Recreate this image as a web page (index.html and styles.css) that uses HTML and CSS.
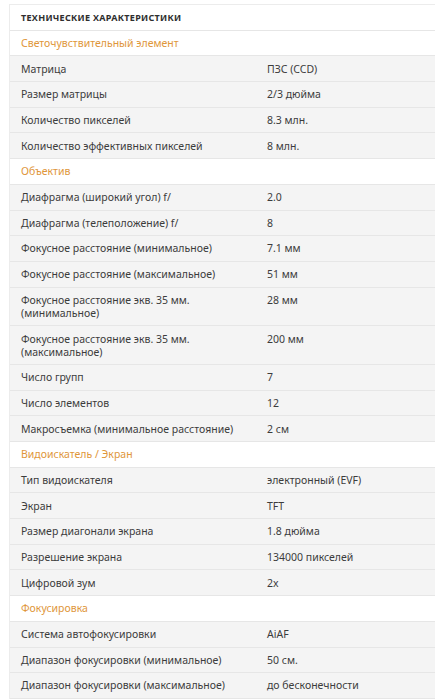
FILE: index.html
```html
<!DOCTYPE html>
<html lang="ru">
<head>
<meta charset="utf-8">
<link rel="stylesheet" href="styles.css">
</head>
<body>
<div class="specs">
  <div class="row head"><div class="cell">Технические характеристики</div></div>
  <div class="row section"><div class="cell">Светочувствительный элемент</div></div>
  <div class="row"><div class="cell">Матрица</div><div class="cell">ПЗС (CCD)</div></div>
  <div class="row"><div class="cell">Размер матрицы</div><div class="cell">2/3 дюйма</div></div>
  <div class="row"><div class="cell">Количество пикселей</div><div class="cell">8.3 млн.</div></div>
  <div class="row"><div class="cell">Количество эффективных пикселей</div><div class="cell">8 млн.</div></div>
  <div class="row section"><div class="cell">Объектив</div></div>
  <div class="row"><div class="cell">Диафрагма (широкий угол) f/</div><div class="cell">2.0</div></div>
  <div class="row"><div class="cell">Диафрагма (телеположение) f/</div><div class="cell">8</div></div>
  <div class="row"><div class="cell">Фокусное расстояние (минимальное)</div><div class="cell">7.1 мм</div></div>
  <div class="row"><div class="cell">Фокусное расстояние (максимальное)</div><div class="cell">51 мм</div></div>
  <div class="row"><div class="cell">Фокусное расстояние экв. 35 мм.<br>(минимальное)</div><div class="cell">28 мм</div></div>
  <div class="row"><div class="cell">Фокусное расстояние экв. 35 мм.<br>(максимальное)</div><div class="cell">200 мм</div></div>
  <div class="row"><div class="cell">Число групп</div><div class="cell">7</div></div>
  <div class="row"><div class="cell">Число элементов</div><div class="cell">12</div></div>
  <div class="row"><div class="cell">Макросъемка (минимальное расстояние)</div><div class="cell">2 см</div></div>
  <div class="row section"><div class="cell">Видоискатель / Экран</div></div>
  <div class="row"><div class="cell">Тип видоискателя</div><div class="cell">электронный (EVF)</div></div>
  <div class="row"><div class="cell">Экран</div><div class="cell">TFT</div></div>
  <div class="row"><div class="cell">Размер диагонали экрана</div><div class="cell">1.8 дюйма</div></div>
  <div class="row"><div class="cell">Разрешение экрана</div><div class="cell">134000 пикселей</div></div>
  <div class="row"><div class="cell">Цифровой зум</div><div class="cell">2x</div></div>
  <div class="row section"><div class="cell">Фокусировка</div></div>
  <div class="row"><div class="cell">Система автофокусировки</div><div class="cell">AiAF</div></div>
  <div class="row"><div class="cell">Диапазон фокусировки (минимальное)</div><div class="cell">50 см.</div></div>
  <div class="row"><div class="cell">Диапазон фокусировки (максимальное)</div><div class="cell">до бесконечности</div></div>
</div>
</body>
</html>
```
FILE: styles.css
```css
html, body {
  margin: 0;
  padding: 0;
  background: #ffffff;
  overflow: hidden;
}
body {
  padding: 4px 0 0 9px;
  font-family: "Noto Sans", "Open Sans", sans-serif;
  font-size: 10.5px;
  line-height: 13px;
  color: #3c3c3c;
}
.specs {
  width: 440px;
  border-left: 1px solid #ececec;
  border-top: 1px solid #ececec;
}
.row {
  display: grid;
  grid-template-columns: 246px 1fr;
  background: #f4f4f4;
  border-bottom: 1px solid #e6e6e6;
}
.cell {
  padding: 6.3px 11px 5.4px;
}
.head, .section {
  background: #ffffff;
  grid-template-columns: 1fr;
}
.head .cell {
  font-weight: 700;
  font-size: 9px;
  letter-spacing: 0.3px;
  text-transform: uppercase;
  color: #2e2e2e;
}
.section .cell {
  color: #e0963a;
}
```
